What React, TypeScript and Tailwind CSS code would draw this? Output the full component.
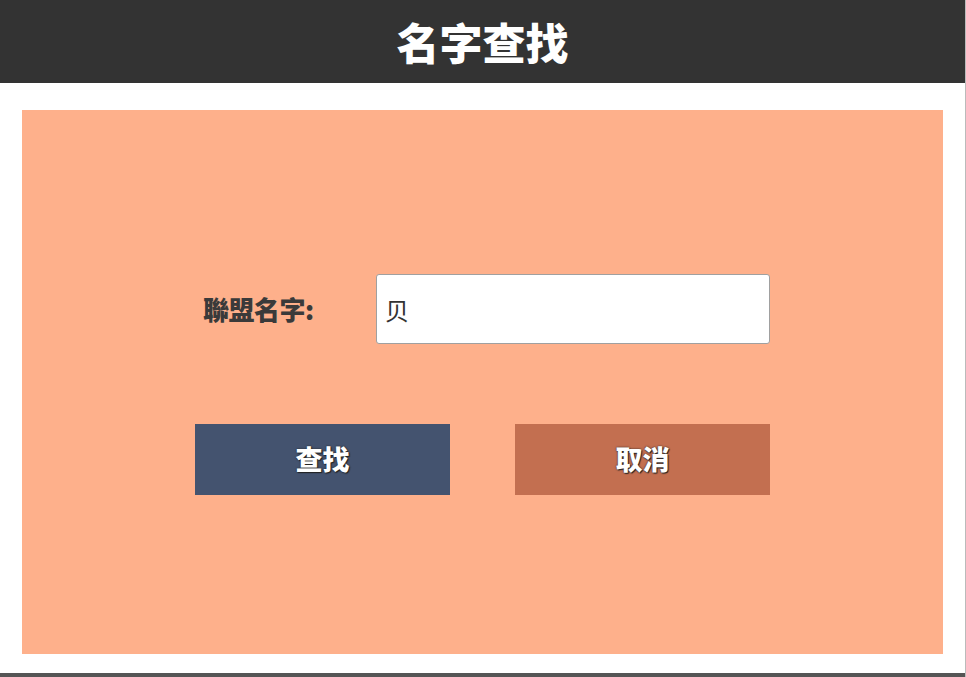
const cjk = "font-['Noto_Sans_CJK_SC','Noto_Sans_CJK_TC',sans-serif]";

export default function App() {
  return (
    <div className={`w-[966px] h-[677px] flex flex-col bg-white border-r border-[#bbbbbb] ${cjk}`}>
      {/* Title bar */}
      <header className="h-[83px] shrink-0 bg-[#333333] flex items-center justify-center">
        <h1 className="text-[43px] font-black text-white leading-none">名字查找</h1>
      </header>

      {/* Form panel */}
      <div className="flex-1 px-[22px] pt-[27px] pb-[19px]">
        <div className="h-[544px] bg-[#feb08b] flex flex-col items-center pt-[164px]">
          <div className="w-[575px] flex items-center">
            <label className="w-[181px] pl-[8px] text-[26px] font-black text-[#3a3a3a] leading-none tracking-[-0.5px]">
              聯盟名字:
            </label>
            <input
              defaultValue="贝"
              className="w-[394px] h-[70px] bg-white border border-[#a0a0a0] rounded-[3px] px-[8px] text-[24px] text-[#333333] outline-none"
            />
          </div>

          <div className="w-[575px] mt-[80px] flex justify-between">
            <button className="w-[255px] h-[71px] bg-[#44536f] text-white text-[27px] font-black [text-shadow:0_0_2px_#222,1px_1px_1px_#222]">
              查找
            </button>
            <button className="w-[255px] h-[71px] bg-[#c36f50] text-white text-[27px] font-black [text-shadow:0_0_2px_#222,1px_1px_1px_#222]">
              取消
            </button>
          </div>
        </div>
      </div>

      <div className="h-[4px] shrink-0 bg-[#555555]" />
    </div>
  );
}
